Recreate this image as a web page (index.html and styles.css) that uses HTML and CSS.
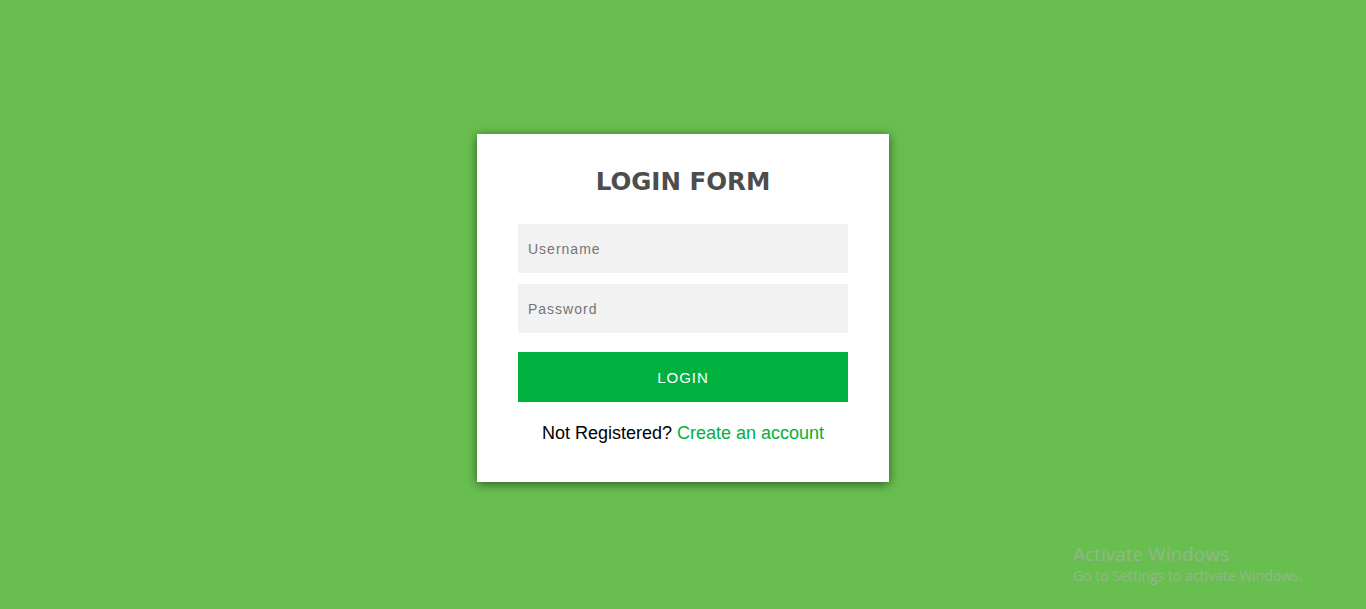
FILE: index.html
```html
<!DOCTYPE html>
<html lang="en">
<head>
<meta charset="utf-8">
<title>Login Form</title>
<link rel="stylesheet" href="styles.css">
</head>
<body>
<main class="page">
  <form class="card">
    <h1 class="title">LOGIN FORM</h1>
    <input class="field" type="text" placeholder="Username">
    <input class="field" type="password" placeholder="Password">
    <button class="btn" type="button">LOGIN</button>
    <p class="note">Not Registered? <a class="link" href="#">Create an account</a></p>
  </form>
</main>
<div class="watermark">
  <div class="wm-title">Activate Windows</div>
  <div class="wm-sub">Go to Settings to activate Windows.</div>
</div>
</body>
</html>
```

FILE: styles.css
```css
html, body {
  margin: 0;
  padding: 0;
  height: 100%;
}
body {
  background: #68bf4f;
  font-family: "Liberation Sans", Arial, sans-serif;
  overflow: hidden;
}
.page {
  height: 100%;
  box-sizing: border-box;
  padding-top: 7px;
  display: flex;
  align-items: center;
  justify-content: center;
}
.card {
  width: 330px;
  background: #fff;
  padding: 31px 41px 38px;
  display: flex;
  flex-direction: column;
  box-shadow: 0 2px 10px rgba(0, 0, 0, 0.55);
}
.title {
  margin: 0 0 25px;
  text-align: center;
  font-family: "DejaVu Sans", Verdana, sans-serif;
  font-weight: bold;
  font-size: 24.5px;
  line-height: 34px;
  color: #4d4d4d;
}
.field {
  height: 49px;
  box-sizing: border-box;
  border: 0;
  outline: 0;
  background: #f2f2f2;
  padding: 0 10px;
  margin: 0 0 11px;
  font-family: "Liberation Sans", Arial, sans-serif;
  font-size: 14px;
  letter-spacing: 1px;
  color: #333;
}
.field::placeholder {
  color: #757575;
}
.btn {
  margin-top: 8px;
  height: 50px;
  border: 0;
  background: #00b140;
  color: #fff;
  font-family: "Liberation Sans", Arial, sans-serif;
  font-size: 15px;
  letter-spacing: 1px;
  cursor: pointer;
}
.note {
  margin: 21px 0 0;
  text-align: center;
  font-size: 18px;
  line-height: 21px;
  color: #000;
}
.link {
  color: #00b140;
  text-decoration: none;
}
.watermark {
  position: absolute;
  left: 1073px;
  top: 542px;
  color: rgba(175, 175, 175, 0.65);
  font-family: "Open Sans", "Noto Sans", sans-serif;
}
.wm-title {
  font-size: 19px;
  line-height: 24px;
}
.wm-sub {
  font-size: 14px;
  line-height: 18px;
  margin-top: 1px;
}
```
